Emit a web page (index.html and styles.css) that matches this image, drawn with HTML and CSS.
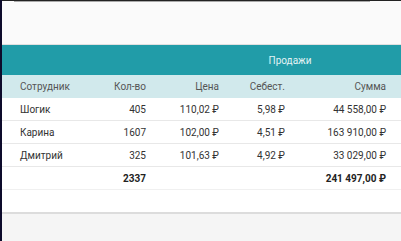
FILE: index.html
```html
<!DOCTYPE html>
<html>
<head>
<meta charset="utf-8">
<link rel="stylesheet" href="styles.css">
</head>
<body>
<div class="frame">
  <div class="topbar"><div class="scroll"></div></div>
  <div class="page">
    <div class="spacer"></div>
    <table class="grid">
      <colgroup>
        <col class="c1"><col class="c2"><col class="c3"><col class="c4"><col class="c5">
      </colgroup>
      <thead>
        <tr class="band">
          <th colspan="2"></th>
          <th colspan="3" class="band-title">Продажи</th>
        </tr>
        <tr class="heads">
          <th class="l">Сотрудник</th>
          <th>Кол-во</th>
          <th>Цена</th>
          <th>Себест.</th>
          <th>Сумма</th>
        </tr>
      </thead>
      <tbody>
        <tr><td class="l">Шогик</td><td>405</td><td>110,02 ₽</td><td>5,98 ₽</td><td>44 558,00 ₽</td></tr>
        <tr><td class="l">Карина</td><td>1607</td><td>102,00 ₽</td><td>4,51 ₽</td><td>163 910,00 ₽</td></tr>
        <tr><td class="l">Дмитрий</td><td>325</td><td>101,63 ₽</td><td>4,92 ₽</td><td>33 029,00 ₽</td></tr>
        <tr class="total"><td class="l"></td><td>2337</td><td></td><td></td><td>241 497,00 ₽</td></tr>
      </tbody>
    </table>
    <div class="after"></div>
    <div class="footer"></div>
  </div>
</div>
</body>
</html>
```
FILE: styles.css
```css
html, body {
  margin: 0;
  padding: 0;
  background: #0d0b2b;
}
.frame {
  width: 401px;
  height: 241px;
  overflow: hidden;
  display: flex;
  flex-direction: column;
  background: #0d0b2b;
  font-family: Roboto, "Liberation Sans", sans-serif;
}
.topbar {
  height: 3px;
  margin-left: 2px;
  background: #fafafa;
  border-top: 1px solid #222;
  box-sizing: border-box;
  padding: 0 31px 0 12px;
}
.scroll {
  height: 1px;
  background: #a9a9a9;
}
.page {
  margin-left: 2px;
  flex: 1;
  display: flex;
  flex-direction: column;
  background: #fafafa;
}
.spacer {
  height: 41px;
  border-bottom: 1px solid #e0e0e0;
}
.grid {
  width: 399px;
  border-collapse: collapse;
  table-layout: fixed;
  font-size: 10px;
  background: #fff;
}
.c1 { width: 88px; }
.c2 { width: 71px; }
.c3 { width: 73px; }
.c4 { width: 66px; }
.c5 { width: 101px; }
.band th {
  height: 30px;
  padding: 0;
  background: #219ca8;
  color: #e3f3f5;
  font-weight: 400;
}
.band-title {
  text-align: center;
  padding-left: 18px !important;
}
.heads th {
  height: 23px;
  padding: 0 15px 0 0;
  background: #d1e9ec;
  color: #555;
  font-weight: 400;
  text-align: right;
}
td {
  height: 22px;
  padding: 0 15px 0 0;
  text-align: right;
  color: #333;
  border-bottom: 1px solid #e8e8e8;
}
.heads th.l, td.l {
  text-align: left;
  padding-left: 18px;
}
.total td {
  font-weight: 700;
  color: #222;
  border-bottom: 1px solid #f0f0f0;
}
.after {
  height: 22px;
  background: #fff;
  border-bottom: 2px solid #dcdcdc;
}
.footer {
  flex: 1;
  background: #f5f5f5;
}
```
